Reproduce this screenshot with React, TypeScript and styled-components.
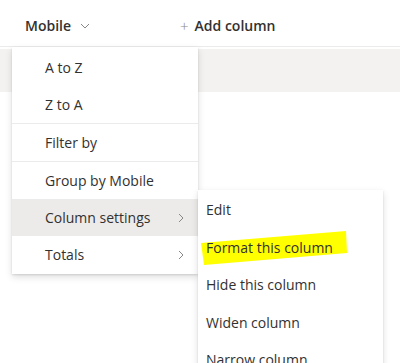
import React from "react";
import styled, { createGlobalStyle } from "styled-components";

const GlobalStyle = createGlobalStyle`
  body {
    margin: 0;
    background: #ffffff;
    font-family: "Open Sans", "Noto Sans", sans-serif;
    color: #323130;
  }
`;

const sortItems = ["A to Z", "Z to A"];
const subItems = ["Edit", "Format this column", "Hide this column", "Widen column", "Narrow column"];

export default function App() {
  return (
    <Page>
      <GlobalStyle />
      <Header>
        <HeaderCell>
          Mobile
          <ChevronDown width="12" height="12" viewBox="0 0 12 12">
            <path d="M2 4l4 4 4-4" fill="none" stroke="#8a8886" strokeWidth="1" />
          </ChevronDown>
        </HeaderCell>
        <AddColumn>
          <Plus>+</Plus>
          Add column
        </AddColumn>
      </Header>
      <Row $selected />
      <Row />

      <Menu>
        {sortItems.map((t) => (
          <Item key={t}>{t}</Item>
        ))}
        <Divider />
        <Item>Filter by</Item>
        <Divider />
        <Item>Group by Mobile</Item>
        <Item $active>
          Column settings
          <Chevron />
        </Item>
        <Item>
          Totals
          <Chevron />
        </Item>
      </Menu>

      <SubMenu>
        {subItems.map((t) =>
          t === "Format this column" ? (
            <SubItem key={t}>
              <Marker viewBox="0 0 150 37" preserveAspectRatio="none">
                <polygon points="0,13 145,1 146,23 3,35" fill="#ffff00" />
              </Marker>
              <MarkedText>{t}</MarkedText>
            </SubItem>
          ) : (
            <SubItem key={t}>{t}</SubItem>
          )
        )}
      </SubMenu>
    </Page>
  );
}

const Chevron = () => (
  <ChevronRight width="10" height="12" viewBox="0 0 10 12">
    <path d="M3 2l4 4-4 4" fill="none" stroke="#8a8886" strokeWidth="1" />
  </ChevronRight>
);

const Page = styled.div`
  position: relative;
  width: 400px;
  height: 363px;
  overflow: hidden;
`;

const Header = styled.div`
  height: 46px;
  display: flex;
  align-items: center;
  border-bottom: 1px solid #edebe9;
  font-size: 14px;
  font-weight: 600;
`;

const HeaderCell = styled.div`
  display: flex;
  align-items: center;
  gap: 8px;
  padding-left: 25px;
  width: 155px;
  margin-top: 5px;
`;

const ChevronDown = styled.svg`
  margin-top: 1px;
`;

const AddColumn = styled.div`
  display: flex;
  align-items: center;
  gap: 6px;
  margin-top: 5px;
`;

const Plus = styled.span`
  font-weight: 300;
  font-size: 15px;
  color: #8a8886;
`;

const Row = styled.div<{ $selected?: boolean }>`
  height: 43px;
  margin-top: ${(p) => (p.$selected ? "2px" : "0")};
  background: ${(p) => (p.$selected ? "#f3f2f1" : "#ffffff")};
`;

const Menu = styled.div`
  position: absolute;
  left: 12px;
  top: 47px;
  width: 186px;
  padding: 2px 0 1px;
  background: #ffffff;
  box-shadow: 0 3.2px 7.2px rgba(0, 0, 0, 0.132), 0 0.6px 1.8px rgba(0, 0, 0, 0.108);
  font-size: 14px;
`;

const Item = styled.div<{ $active?: boolean }>`
  height: 37px;
  display: flex;
  align-items: center;
  justify-content: space-between;
  padding: 0 12px 0 33px;
  background: ${(p) => (p.$active ? "#edebe9" : "transparent")};
`;

const ChevronRight = styled.svg`
  display: block;
`;

const Divider = styled.div`
  height: 1px;
  background: #edebe9;
`;

const SubMenu = styled.div`
  position: absolute;
  left: 198px;
  top: 190px;
  width: 185px;
  padding-top: 1px;
  background: #ffffff;
  box-shadow: 0 3.2px 7.2px rgba(0, 0, 0, 0.132), 0 0.6px 1.8px rgba(0, 0, 0, 0.108);
  font-size: 14px;
`;

const SubItem = styled.div`
  position: relative;
  height: 37.5px;
  display: flex;
  align-items: center;
  padding-left: 8px;
`;

const Marker = styled.svg`
  position: absolute;
  left: 3px;
  top: 1px;
  width: 150px;
  height: 37px;
`;

const MarkedText = styled.span`
  position: relative;
`;
